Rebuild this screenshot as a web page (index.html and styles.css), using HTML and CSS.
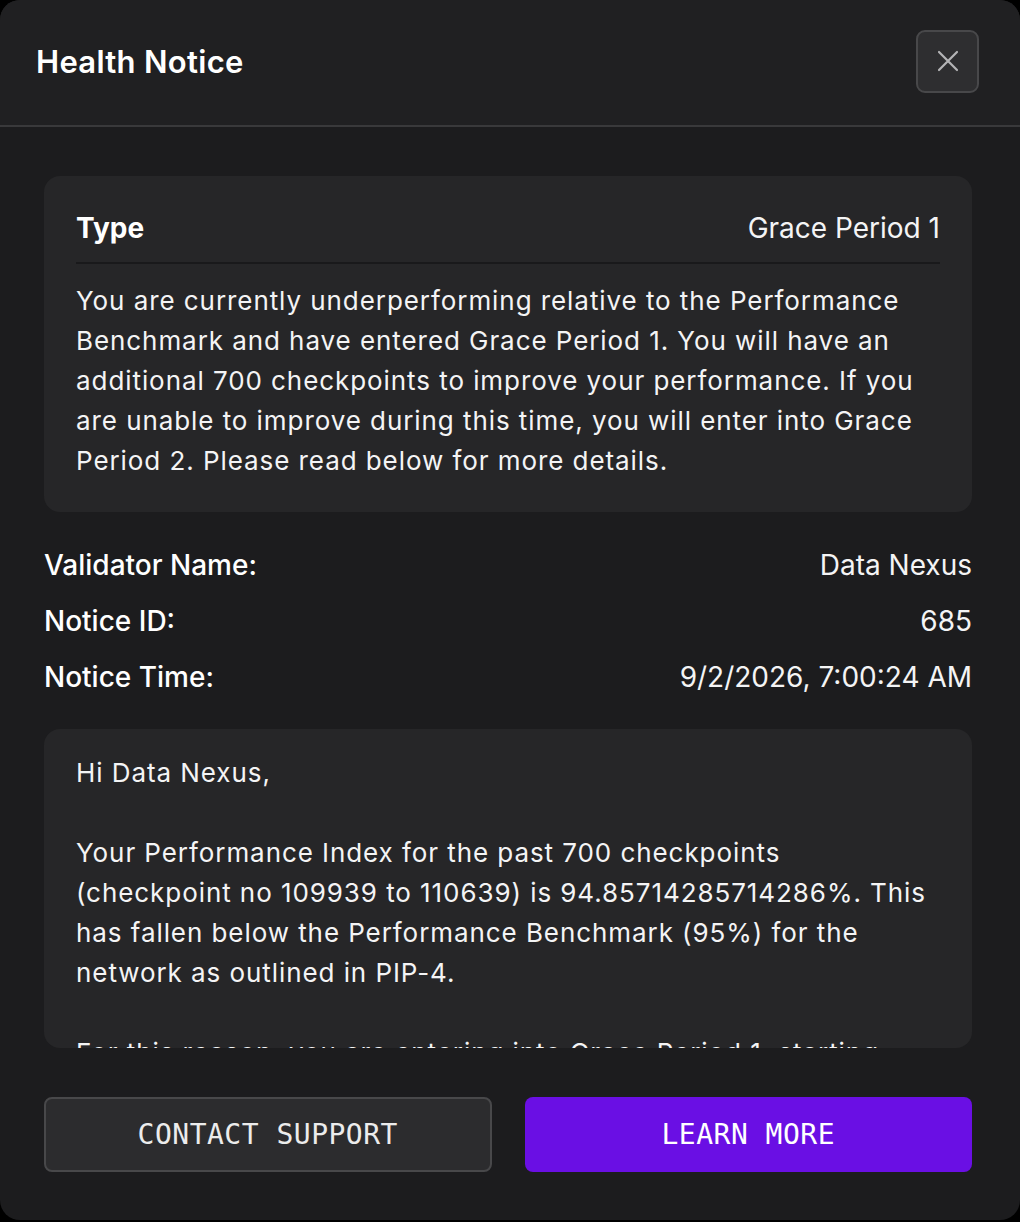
FILE: index.html
```html
<!DOCTYPE html>
<html lang="en">
<head>
<meta charset="utf-8">
<title>Health Notice</title>
<link rel="stylesheet" href="styles.css">
</head>
<body>
<div class="modal">
  <header class="modal-header">
    <h1 class="modal-title">Health Notice</h1>
    <button class="close-btn" aria-label="Close">
      <svg width="22" height="22" viewBox="0 0 22 22" fill="none" stroke="currentColor" stroke-width="2.2" stroke-linecap="round">
        <path d="M2 2 L20 20 M20 2 L2 20"/>
      </svg>
    </button>
  </header>

  <main class="modal-body">
    <section class="card type-card">
      <div class="type-row">
        <span class="type-label">Type</span>
        <span class="type-value">Grace Period 1</span>
      </div>
      <p class="type-desc">You are currently underperforming relative to the Performance Benchmark and have entered Grace Period 1. You will have an additional 700 checkpoints to improve your performance. If you are unable to improve during this time, you will enter into Grace Period 2. Please read below for more details.</p>
    </section>

    <dl class="info-list">
      <div class="info-row"><dt>Validator Name:</dt><dd>Data Nexus</dd></div>
      <div class="info-row"><dt>Notice ID:</dt><dd>685</dd></div>
      <div class="info-row"><dt>Notice Time:</dt><dd>9/2/2026, 7:00:24 AM</dd></div>
    </dl>

    <section class="card message-card">
      <p>Hi Data Nexus,</p>
      <p>Your Performance Index for the past 700 checkpoints (checkpoint no 109939 to 110639) is 94.85714285714286%. This has fallen below the Performance Benchmark (95%) for the network as outlined in PIP-4.</p>
      <p>For this reason, you are entering into Grace Period 1, starting from checkpoint 110640. You will have an additional 700 checkpoints to improve your performance.</p>
      <p>If your Performance Index remains below the benchmark, you will enter into Grace Period 2.</p>
    </section>

    <div class="actions">
      <button class="btn btn-secondary">CONTACT SUPPORT</button>
      <button class="btn btn-primary">LEARN MORE</button>
    </div>
  </main>
</div>
</body>
</html>
```

FILE: styles.css
```css
* {
  box-sizing: border-box;
}

html, body {
  margin: 0;
  padding: 0;
  background: #000;
}

body {
  font-family: Inter, "Noto Sans", sans-serif;
  color: #f4f4f5;
}

.modal {
  width: 1020px;
  height: 1220px;
  background: #1c1c1e;
  border-radius: 20px;
  overflow: hidden;
  display: flex;
  flex-direction: column;
}

.modal-header {
  height: 127px;
  flex: none;
  display: flex;
  align-items: center;
  justify-content: space-between;
  padding: 0 41px 3px 36px;
  background: #202022;
  border-bottom: 2px solid #39393b;
}

.modal-title {
  margin: 0;
  font-size: 31px;
  font-weight: 600;
  color: #ffffff;
  letter-spacing: 0.3px;
}

.close-btn {
  width: 63px;
  height: 63px;
  display: flex;
  align-items: center;
  justify-content: center;
  background: #2e2e30;
  border: 2px solid #48484a;
  border-radius: 9px;
  color: #b4b4b6;
  padding: 0;
  cursor: pointer;
}

.modal-body {
  flex: 1;
  display: flex;
  flex-direction: column;
  padding: 49px 48px 48px 44px;
}

.card {
  background: #262628;
  border-radius: 16px;
}

.type-card {
  padding: 32px 32px 31px 32px;
}

.type-row {
  display: flex;
  justify-content: space-between;
  align-items: center;
  font-size: 28px;
  line-height: 40px;
  padding-bottom: 14px;
  border-bottom: 2px solid #19191b;
}

.type-label {
  font-weight: 700;
  color: #ffffff;
}

.type-value {
  font-weight: 400;
}

.type-desc {
  margin: 17px 0 0;
  font-size: 26px;
  line-height: 40px;
  letter-spacing: 0.93px;
}

.info-list {
  margin: 33px 0 0;
  display: flex;
  flex-direction: column;
  gap: 16px;
}

.info-row {
  display: flex;
  justify-content: space-between;
  font-size: 28px;
  line-height: 40px;
}

.info-row dt {
  font-weight: 500;
  color: #ffffff;
}

.info-row dd {
  margin: 0;
  font-weight: 400;
}

.message-card {
  margin-top: 32px;
  height: 319px;
  overflow: hidden;
  padding: 24px 32px 24px 32px;
  font-size: 26px;
  line-height: 40px;
  letter-spacing: 0.93px;
}

.message-card p {
  margin: 0 0 40px;
}

.actions {
  margin-top: auto;
  display: grid;
  grid-template-columns: 1fr 1fr;
  gap: 33px;
}

.btn {
  height: 75px;
  border-radius: 8px;
  font-family: "DejaVu Sans Mono", "Liberation Mono", monospace;
  font-size: 28px;
  letter-spacing: 0.5px;
  cursor: pointer;
}

.btn-secondary {
  background: #2c2c2e;
  border: 2px solid #48484a;
  color: #ececec;
}

.btn-primary {
  background: #6a0fe4;
  border: none;
  color: #ffffff;
}
```
